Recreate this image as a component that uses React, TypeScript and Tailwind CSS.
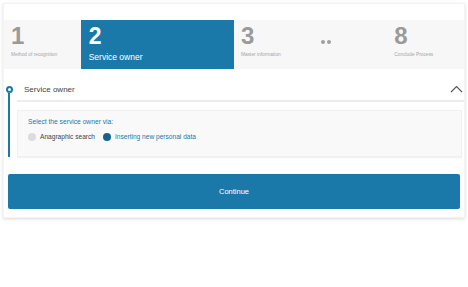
import React from 'react';

const steps = [
  { n: '1', label: 'Method of recognition' },
  { n: '2', label: 'Service owner', active: true },
  { n: '3', label: 'Master information' },
  { n: '..', label: '' },
  { n: '8', label: 'Conclude Process' },
];

export default function App() {
  return (
    <div className="w-[468px] h-[287px] bg-white p-[3px] font-['Liberation_Sans',Arial,sans-serif]">
      <div className="w-[462px] bg-white border border-gray-100 shadow-[0_1px_3px_rgba(0,0,0,0.15)]">
        <div className="h-[16px]" />

        {/* stepper */}
        <div className="grid grid-cols-6 h-[49px] bg-[#f7f7f7]">
          {steps.map((s) =>
            s.active ? (
              <div key={s.n} className="col-span-2 bg-[#1b79aa] px-[8px] pt-[3px] text-white">
                <div className="text-[23px] font-bold leading-[26px]">{s.n}</div>
                <div className="text-[8.5px] leading-[12px] mt-[2px]">{s.label}</div>
              </div>
            ) : s.n === '..' ? (
              <div key={s.n} className="px-[10px] pt-[20px]">
                <div className="flex gap-[2px]">
                  <span className="w-[4px] h-[4px] rounded-full bg-[#a0a0a0]" />
                  <span className="w-[4px] h-[4px] rounded-full bg-[#a0a0a0]" />
                </div>
              </div>
            ) : (
              <div key={s.n} className="px-[7px] pt-[3px] text-[#9a9a9a]">
                <div className="text-[24px] font-bold leading-[26px]">{s.n}</div>
                <div className="text-[4.8px] leading-[8px] mt-[2px] text-[#a5a5a5]">{s.label}</div>
              </div>
            )
          )}
        </div>

        {/* section */}
        <div className="flex pt-[11px]">
          <div className="w-[10px] flex flex-col items-center pt-[6px]">
            <span className="w-[7px] h-[7px] rounded-full border-2 border-[#1b79aa] bg-white" />
            <span className="w-[2px] flex-1 bg-[#1b79aa]" />
          </div>
          <div className="flex-1 ml-[3px]">
            <div className="h-[22px] flex items-center justify-between border-b-2 border-[#ececec] pl-[7px] pr-[1px]">
              <span className="text-[8px] font-medium text-[#444]">Service owner</span>
              <svg width="13" height="8" viewBox="0 0 13 8" className="mb-[3px]">
                <polyline points="1,7 6.5,1.5 12,7" fill="none" stroke="#555" strokeWidth="1.1" />
              </svg>
            </div>
            <div className="mt-[8px] mr-[2px] h-[47px] bg-[#f9f9f9] border border-[#f0f0f0] shadow-[0_1px_1px_rgba(0,0,0,0.05)] px-[10px] pt-[6px]">
              <div className="text-[6.7px] text-[#1b79aa] leading-[10px]">Select the service owner via:</div>
              <div className="flex items-center mt-[5px] text-[6.6px] leading-[10px]">
                <span className="w-[8px] h-[8px] rounded-full bg-[#dcdcdc]" />
                <span className="ml-[4px] text-[#444]">Anagraphic search</span>
                <span className="ml-[8px] w-[8px] h-[8px] rounded-full bg-[#16648e]" />
                <span className="ml-[4px] text-[#1b79aa]">Inserting new personal data</span>
              </div>
            </div>
          </div>
        </div>

        <div className="px-[4px] pt-[17px] pb-[8px]">
          <button className="w-full h-[35px] bg-[#1b79aa] rounded-[2px] text-white text-[7.5px]">Continue</button>
        </div>
      </div>
    </div>
  );
}
